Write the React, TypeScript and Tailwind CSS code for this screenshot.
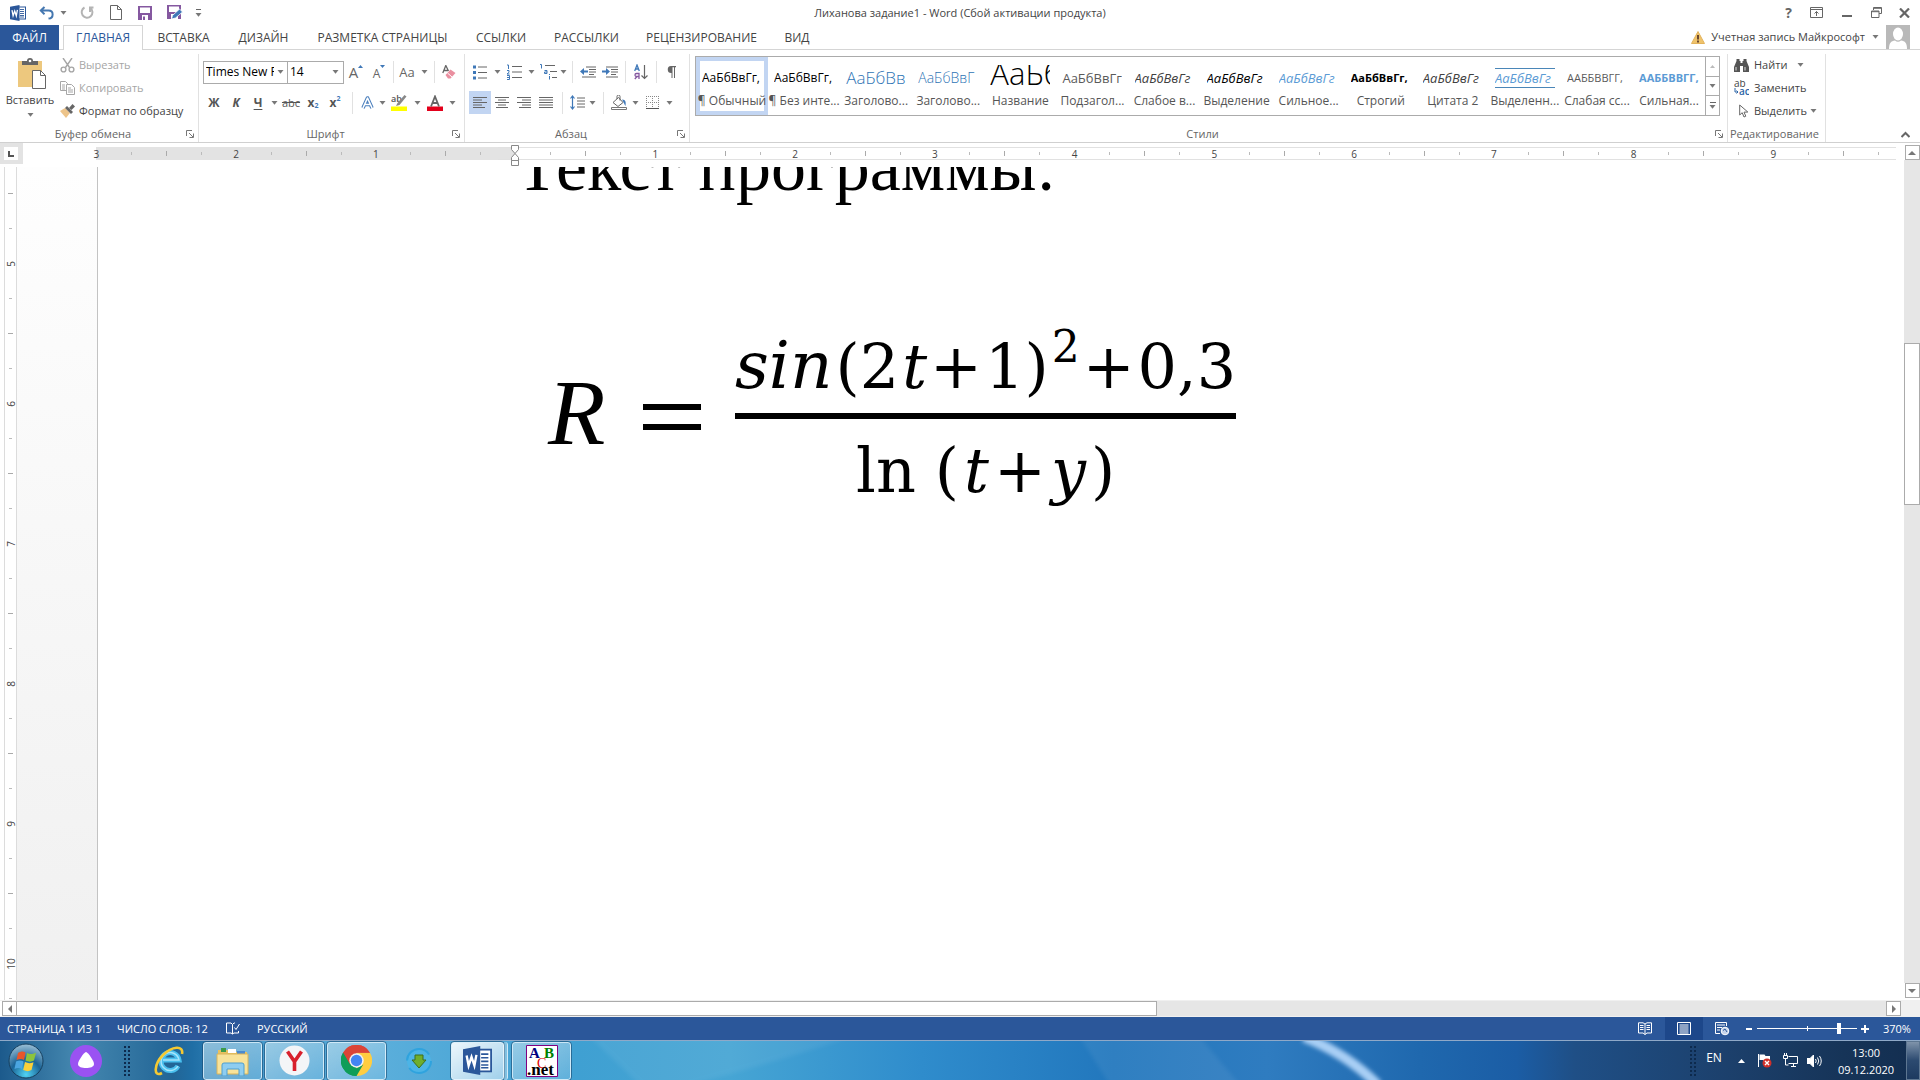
import React from "react";

type Kids = { children?: React.ReactNode };

const Caret = ({ className = "text-[#777]" }: { className?: string }) => (
  <svg width="7" height="4" viewBox="0 0 7 4" className={className} fill="currentColor">
    <path d="M0.5 0h6L3.5 3.8z" />
  </svg>
);

const Drop = ({ label, w = "w-3" }: { label: string; w?: string }) => (
  <button aria-label={label} className={`${w} h-[22px] shrink-0 flex items-center justify-center`}>
    <Caret />
  </button>
);

const Sep = ({ w = "w-[10px]" }: { w?: string }) => (
  <div className={`${w} shrink-0 flex justify-center`}>
    <div className="w-px h-[22px] bg-[#e1e1e1]" />
  </div>
);

const Tool = ({ label, w = "w-[22px]", active = false, children }: Kids & { label: string; w?: string; active?: boolean }) => (
  <button
    aria-label={label}
    className={`${w} h-[23px] shrink-0 flex items-center justify-center ${active ? "bg-[#c2d5f2]" : ""}`}
  >
    {children}
  </button>
);

const Launcher = ({ label }: { label: string }) => (
  <button aria-label={label} className="flex items-center justify-center">
    <svg width="8" height="8" viewBox="0 0 8 8" fill="none" stroke="#777">
      <path d="M0.5 6V0.5H6M3 3l4 4M7.5 3.5v4h-4" />
    </svg>
  </button>
);

const Group = ({ w, name, launcher = true, children }: Kids & { w: string; name: string; launcher?: boolean }) => (
  <section aria-label={name} className={`${w} flex flex-col border-r border-[#e1e1e1] mt-1`}>
    <div className="flex-1 min-h-0">{children}</div>
    <div className="h-[17px] flex items-center pr-[4px] text-[11px] text-[#666]">
      <span className="flex-1 text-center whitespace-nowrap">{name}</span>
      {launcher && <Launcher label={`${name}: параметры`} />}
    </div>
  </section>
);

const WordMark = ({ size = 16 }: { size?: number }) => (
  <svg width={size} height={size} viewBox="0 0 16 16">
    <rect x="8.5" y="2" width="7" height="12" fill="#fff" stroke="#2b579a" />
    <path d="M10 4.5h4M10 6.5h4M10 8.5h4M10 10.5h4M10 12h4" stroke="#2b579a" strokeWidth=".9" />
    <path d="M0 1.8 9.5 0v16L0 14.2z" fill="#2b579a" />
    <path d="M2 5.2l1.1 5.6L4.7 6l1.6 4.8 1.1-5.9" fill="none" stroke="#fff" strokeWidth="1.3" />
  </svg>
);

const TitleBar = () => (
  <header className="h-[25px] grid grid-cols-[1fr_auto_1fr] items-center text-[#444]">
    <div className="flex items-center pl-[10px] h-[22px]">
      <WordMark />
      <button aria-label="Отменить" className="ml-[13px]">
        <svg width="16" height="14" viewBox="0 0 16 14" fill="none" stroke="#4477b0" strokeWidth="2">
          <path d="M5.5 1 1.8 4.6l3.7 3.6M2 4.6h7.5c5.5 0 5.5 7.4 0 8" />
        </svg>
      </button>
      <Drop label="История отмены" w="w-[16px]" />
      <button aria-label="Повторить" className="ml-[8px]">
        <svg width="16" height="14" viewBox="0 0 16 14" fill="none" stroke="#b4b4b4" strokeWidth="2">
          <path d="M5.5 1.5a5.4 5.4 0 1 0 6 .6M11 6V1.5h3.5" />
        </svg>
      </button>
      <button aria-label="Создать" className="ml-[15px]">
        <svg width="12" height="15" viewBox="0 0 12 15" fill="#fff" stroke="#666">
          <path d="M.5.5h7l4 4v10H.5zM7.500.5v4h4" />
        </svg>
      </button>
      <button aria-label="Сохранить" className="ml-[16px]">
        <svg width="14" height="14" viewBox="0 0 14 14">
          <path d="M0 0h14v14H0z" fill="#8558a0" />
          <path d="M2 1.500h10V7H2zM4 9h6v5H4z" fill="#fff" />
          <path d="M5 10.500h2V14H5z" fill="#8558a0" />
        </svg>
      </button>
      <button aria-label="Сохранить как" className="ml-[15px]">
        <svg width="16" height="15" viewBox="0 0 16 15">
          <path d="M0 0h14v14H0z" fill="#8558a0" />
          <path d="M2 1.500h10V7H2zM4 9h7v5H4z" fill="#fff" />
          <path d="m4.500 14 1-3.500L12.500 4l3 3-7 6z" fill="#3f78b8" stroke="#fff" strokeWidth=".8" />
        </svg>
      </button>
      <button aria-label="Настройка панели быстрого доступа" className="ml-[12px] flex flex-col items-center gap-[3px]">
        <span className="w-[5px] h-px bg-[#666]" />
        <Caret />
      </button>
    </div>
    <h1 className="whitespace-nowrap text-[11px]">Лиханова задание1 - Word (Сбой активации продукта)</h1>
    <div className="flex items-center justify-end pr-[10px] gap-[17px] text-[#666]">
      <button aria-label="Справка" className="font-bold text-[14px] leading-4 mr-px">?</button>
      <button aria-label="Параметры ленты">
        <svg width="13" height="11" viewBox="0 0 13 11" fill="none" stroke="#666">
          <path d="M.5.5h12v10H.5zM.5 2.500h12M6.500 9V4.500M4.500 6.500l2-2 2 2" />
        </svg>
      </button>
      <button aria-label="Свернуть" className="h-3 flex items-end pb-[2px] ml-[2px]">
        <span className="w-[10px] h-[2px] bg-[#666]" />
      </button>
      <button aria-label="Восстановить" className="ml-[2px]">
        <svg width="11" height="11" viewBox="0 0 11 11" fill="none" stroke="#666">
          <path d="M2.500 3V.5h8v6H8M.5 4h7.500v6.500H.5zM2.500 1.300h8M.5 4.700H8" />
        </svg>
      </button>
      <button aria-label="Закрыть">
        <svg width="11" height="10" viewBox="0 0 11 10" fill="none" stroke="#666" strokeWidth="2.200">
          <path d="m1 .5 9 9M10 .5l-9 9" />
        </svg>
      </button>
    </div>
  </header>
);

const tabs = [
  { t: "ВСТАВКА", w: "w-[81px]" },
  { t: "ДИЗАЙН", w: "w-[79px]" },
  { t: "РАЗМЕТКА СТРАНИЦЫ", w: "w-[159px]" },
  { t: "ССЫЛКИ", w: "w-[78px]" },
  { t: "РАССЫЛКИ", w: "w-[93px]" },
  { t: "РЕЦЕНЗИРОВАНИЕ", w: "w-[137px]" },
  { t: "ВИД", w: "w-[54px]" },
];

const Tabs = () => (
  <nav className="h-[25px] flex text-[#444] whitespace-nowrap">
    <button className="w-[59px] bg-[#2b579a] text-white pt-px">ФАЙЛ</button>
    <div className="w-1 border-b border-[#d5d5d5]" />
    <button className="w-[80px] border-x border-t border-[#d5d5d5] text-[#2b579a]">ГЛАВНАЯ</button>
    <div className="flex flex-1 border-b border-[#d5d5d5]">
      {tabs.map((x) => (
        <button key={x.t} className={`${x.w} shrink-0 pt-[2px]`}>
          {x.t}
        </button>
      ))}
      <div className="ml-auto flex items-center pr-[10px] text-[11px]">
        <svg width="14" height="13" viewBox="0 0 14 13" className="mr-[6px]">
          <path d="M7 .5 13.500 12.500H.5z" fill="#efc36b" stroke="#e3b35c" strokeLinejoin="round" />
          <path d="M7 4v4.500M7 9.500v2" stroke="#5b3a2a" strokeWidth="1.800" />
        </svg>
        <button className="flex items-center gap-[7px]">
          Учетная запись Майкрософт <Caret />
        </button>
        <svg width="24" height="24" viewBox="0 0 24 24" className="ml-[7px]">
          <path d="M0 0h24v24H0z" fill="#b9b9b9" />
          <ellipse cx="12" cy="9" rx="5" ry="6.500" fill="#fff" />
          <path d="M3 24c0-6 2-8 6-8.500 2 1.600 4 1.600 6 0 4 .5 6 2.500 6 8.500z" fill="#fff" />
        </svg>
      </div>
    </div>
  </nav>
);

const Clipboard = () => (
  <div className="flex text-[11px]">
    <button className="w-[60px] shrink-0 flex flex-col items-center text-[#444] pt-[4px]">
      <svg width="28" height="31" viewBox="0 0 28 31" className="ml-[4px]">
        <path d="M0 3h24v26H0z" fill="#edc87e" />
        <path d="M4 7V3h5a3 3 0 0 1 6 0h5v4z" fill="#666" />
        <circle cx="12" cy="3" r="1.300" fill="#fff" />
        <path d="M14.500 12.500h8l5 5v13h-13z" fill="#fff" stroke="#666" />
        <path d="M22.500 12.500v5h5" fill="none" stroke="#666" />
      </svg>
      <span className="mt-[2px] leading-[18px]">Вставить</span>
      <span className="mt-[4px]"><Caret /></span>
    </button>
    <div className="flex flex-col whitespace-nowrap">
      <button className="h-[22px] flex items-center gap-[4px] text-[#a6a6a6]">
        <svg width="15" height="15" viewBox="0 0 15 15" fill="none" stroke="#a6a6a6" strokeWidth="1.400">
          <path d="m3 0 6.500 9.500M12 0 5.500 9.500" />
          <circle cx="3.500" cy="11.500" r="2.400" />
          <circle cx="11.500" cy="11.500" r="2.400" />
        </svg>
        Вырезать
      </button>
      <button className="h-[23px] flex items-center gap-[4px] text-[#a6a6a6]">
        <svg width="15" height="14" viewBox="0 0 15 14" fill="#fff" stroke="#a6a6a6">
          <path d="M.5.5h5l2 2v7h-7zM2 4h3M2 6h3M2 8h3" />
          <path d="M6.500 3.500h5l3 3v7h-8zM8 7h3M8 9h5M8 11h5" />
        </svg>
        Копировать
      </button>
      <button className="h-[23px] flex items-center gap-[4px] text-[#444]">
        <svg width="15" height="14" viewBox="0 0 15 14">
          <path d="M0 7 5 4l5 5-4 5z" fill="#edc48a" />
          <path d="m5 4 2-2 6 6-2 2z" fill="#666" />
          <path d="m9 4 3.500-4L15 2.500 11.500 6z" fill="#666" />
        </svg>
        Формат по образцу
      </button>
    </div>
  </div>
);

const FontGroup = () => (
  <div className="pl-1">
    <div className="flex items-center mt-[6px] h-[24px]">
      <div className="w-[85px] h-[23px] flex items-center border border-[#ababab]">
        <input aria-label="Шрифт" defaultValue="Times New Roman" className="min-w-0 w-[70px] pl-[2px] text-black outline-none" />
        <Drop label="Выбрать шрифт" />
      </div>
      <div className="w-[56px] h-[23px] flex items-center border border-l-0 border-[#ababab]">
        <input aria-label="Размер шрифта" defaultValue="14" className="min-w-0 w-[41px] pl-[2px] text-black outline-none" />
        <Drop label="Выбрать размер" />
      </div>
      <Tool label="Увеличить размер" w="w-6">
        <span className="text-[15px] text-[#666]">A</span>
        <svg width="5" height="3" viewBox="0 0 5 3" className="self-start mt-[4px]"><path d="M0 3 2.500 0 5 3z" fill="#3f78b8" /></svg>
      </Tool>
      <Tool label="Уменьшить размер">
        <span className="text-[12px] text-[#666] pt-[3px]">A</span>
        <svg width="5" height="3" viewBox="0 0 5 3" className="self-start mt-[4px]"><path d="M0 0 2.500 3 5 0z" fill="#3f78b8" /></svg>
      </Tool>
      <Sep w="w-[6px]" />
      <Tool label="Регистр"><span className="text-[13px] text-[#666]">Aa</span></Tool>
      <Drop label="Варианты регистра" />
      <Sep w="w-2" />
      <Tool label="Удалить форматирование">
        <svg width="14" height="14" viewBox="0 0 14 14">
          <path d="m.8 8 3-7.500L6.500 6M2 5.500h4" fill="none" stroke="#666" strokeWidth="1.300" />
          <path d="m3.500 10 5-5.500L13.500 8 8.500 13.500H6z" fill="#ea8fa0" />
          <path d="M5.500 8 10 12" stroke="#fff" />
        </svg>
      </Tool>
    </div>
    <div className="flex items-center mt-[7px] text-[#555] font-bold">
      <Tool label="Полужирный">Ж</Tool>
      <Tool label="Курсив"><span className="italic">К</span></Tool>
      <Tool label="Подчеркнутый"><span className="underline underline-offset-2">Ч</span></Tool>
      <Drop label="Вид подчеркивания" w="w-[10px]" />
      <Tool label="Зачеркнутый" w="w-6"><span className="line-through font-normal text-[11px]">abc</span></Tool>
      <Tool label="Подстрочный" w="w-5">x<span className="text-[7px] text-[#3f78b8] self-end">2</span></Tool>
      <Tool label="Надстрочный" w="w-6">x<span className="text-[7px] text-[#3f78b8] self-start">2</span></Tool>
      <Sep />
      <Tool label="Текстовые эффекты" w="w-5">
        <svg width="13" height="14" viewBox="0 0 13 14" fill="none" strokeLinejoin="round">
          <path d="M2 12 6.500 2 11 12M4 8.500h5" stroke="#4a7fbd" strokeWidth="3.600" />
          <path d="M2 12 6.500 2 11 12M4 8.500h5" stroke="#fff" strokeWidth="1.600" />
        </svg>
      </Tool>
      <Drop label="Выбрать эффект" w="w-[10px]" />
      <Tool label="Цвет выделения" w="w-[25px]">
        <svg width="17" height="17" viewBox="0 0 17 17">
          <path d="M0 12.500h16V17H0z" fill="#ffff00" />
          <text x="0" y="8" fontSize="9" fontWeight="600" fill="#555">ab</text>
          <path d="m5 12 1.500-3L13.500 1l2 1.500L8.500 11z" fill="#888" />
        </svg>
      </Tool>
      <Drop label="Выбрать цвет выделения" w="w-[10px]" />
      <Tool label="Цвет текста" w="w-[25px]">
        <svg width="16" height="16" viewBox="0 0 16 16">
          <path d="M0 11.500h16V16H0z" fill="#e3001b" />
          <path d="m4 11.500 4-10 4 10M5.500 8h5" fill="none" stroke="#666" strokeWidth="1.800" />
        </svg>
      </Tool>
      <Drop label="Выбрать цвет текста" w="w-[10px]" />
    </div>
  </div>
);

const Lines = ({ d }: { d: string }) => (
  <svg width="15" height="13" viewBox="0 0 15 13" stroke="#666" fill="none"><path d={d} /></svg>
);

const Paragraph = () => (
  <div className="pl-[4px]">
    <div className="flex items-center mt-[6px] h-[24px]">
      <Tool label="Маркеры">
        <svg width="14" height="15" viewBox="0 0 14 15">
          <path d="M5 2h9M5 7.500h9M5 13h9" stroke="#666" />
          <path d="M0 .5h3v3H0zM0 6h3v3H0zM0 11.500h3v3H0z" fill="#3f78b8" />
        </svg>
      </Tool>
      <Drop label="Вид маркеров" />
      <Tool label="Нумерация">
        <svg width="15" height="16" viewBox="0 0 15 16">
          <path d="M5 2.500h10M5 8h10M5 13.500h10" stroke="#666" />
          <path d="M0 1h1.500v4M0 6.500h2v1.800L0 10h2.500M0 11.500h2.500v4H0M0 13.500h2" stroke="#3f78b8" fill="none" />
        </svg>
      </Tool>
      <Drop label="Вид нумерации" />
      <Tool label="Многоуровневый список">
        <svg width="17" height="16" viewBox="0 0 17 16">
          <path d="M5 1.500h10M10 7.500h7M12 13.500h5" stroke="#666" />
          <path d="M0 .5h1.500v4M4.500 6.500H7v3H4.500V8H7M9.500 12v3.500M9.500 10v1" stroke="#3f78b8" fill="none" />
        </svg>
      </Tool>
      <Drop label="Вид списка" w="w-[8px]" />
      <Sep w="w-[10px]" />
      <Tool label="Уменьшить отступ">
        <svg width="16" height="12" viewBox="0 0 16 12">
          <path d="M6 1h10M9 3.500h7M9 6h7M9 8.500h5M2 11h14" stroke="#666" />
          <path d="M0 5.500 4 2v2.500h4v2H4V9z" fill="#3f78b8" />
        </svg>
      </Tool>
      <Tool label="Увеличить отступ">
        <svg width="16" height="12" viewBox="0 0 16 12">
          <path d="M4 1h12M9 3.500h7M9 6h7M9 8.500h5M4 11h12" stroke="#666" />
          <path d="M8 5.500 4 2v2.500H0v2h4V9z" fill="#3f78b8" />
        </svg>
      </Tool>
      <Sep w="w-2" />
      <Tool label="Сортировка" w="w-6">
        <svg width="14" height="16" viewBox="0 0 14 16" fill="none">
          <path d="M.7 7 3 1l2.300 6M1.500 5h3" stroke="#3f78b8" strokeWidth="1.300" />
          <path d="M5 15V9.500H2.500a1.500 1.500 0 0 0 0 3H5M3 12.500.8 15" stroke="#8558a0" strokeWidth="1.300" />
          <path d="M10.500 1v13M7.500 11.500l3 3 3-3" stroke="#666" strokeWidth="1.200" />
        </svg>
      </Tool>
      <Sep w="w-[6px]" />
      <Tool label="Все знаки" w="w-6">
        <svg width="10" height="12" viewBox="0 0 10 12">
          <path d="M5 0H10v1.200H9V12H8V1.200H6.500V12h-1V7A3.500 3.500 0 0 1 5 0z" fill="#666" />
        </svg>
      </Tool>
    </div>
    <div className="flex items-center mt-[7px]">
      <Tool label="По левому краю" active><Lines d="M0 1.500h14M0 4h9M0 6.500h14M0 9h9M0 11.500h12" /></Tool>
      <Tool label="По центру"><Lines d="M0 1.500h14M3 4h8M0 6.500h14M3 9h8M1 11.500h12" /></Tool>
      <Tool label="По правому краю"><Lines d="M0 1.500h14M5 4h9M0 6.500h14M5 9h9M2 11.500h12" /></Tool>
      <Tool label="По ширине"><Lines d="M0 1.500h14M0 4h14M0 6.500h14M0 9h14M0 11.500h14" /></Tool>
      <Sep />
      <Tool label="Интервал" w="w-5">
        <svg width="15" height="15" viewBox="0 0 15 15">
          <path d="M7 3h8M7 6h8M7 9h8M7 12h8" stroke="#666" />
          <path d="M2.500 1v13M.5 3.500l2-2.500 2 2.500M.5 11.500l2 2.500 2-2.500" stroke="#3f78b8" strokeWidth="1.200" fill="none" />
        </svg>
      </Tool>
      <Drop label="Выбрать интервал" w="w-[10px]" />
      <Sep w="w-3" />
      <Tool label="Заливка" w="w-5">
        <svg width="16" height="15" viewBox="0 0 16 15" fill="none">
          <path d="m2 7.500 5.500-5L12 7.500l-5 4zM6 4V1.500a1.500 1.500 0 0 1 3 0v4" stroke="#666" />
          <path d="M11 4.500c4 0 4 3 3.500 6.500-1-1-1.500-3.500-3.500-6.500z" fill="#3f78b8" />
          <path d="M.5 12.500h15v2H.5z" stroke="#777" fill="#fff" />
        </svg>
      </Tool>
      <Drop label="Цвет заливки" />
      <Tool label="Границы">
        <svg width="13" height="13" viewBox="0 0 13 13" fill="none" stroke="#888" strokeDasharray="1 1">
          <path d="M0 .5h13M.5 0v13M12.500 0v13M6.500 0v13M0 6.500h13" />
          <path d="M0 12.500h13" strokeDasharray="none" stroke="#555" />
        </svg>
      </Tool>
      <Drop label="Вид границ" />
    </div>
  </div>
);

const sample = "АаБбВвГг,";
const line = "h-5 leading-[18px] items-center overflow-x-clip";
const stylesList = [
  { n: "¶ Обычный", s: sample, b: line, c: "text-black", on: true },
  { n: "¶ Без инте...", s: sample, b: line, c: "text-black" },
  { n: "Заголово...", s: "АаБбВвГ", b: line, c: "text-[17px] font-light text-[#2e74b5]" },
  { n: "Заголово...", s: "АаБбВвГ", b: line, c: "text-[14px] font-light text-[#2e74b5]" },
  { n: "Название", s: "АаБб", b: "h-[26px] leading-[16px] items-start overflow-hidden", c: "text-[31px] font-light text-black" },
  { n: "Подзагол...", s: "АаБбВвГг", b: line, c: "text-[13px] text-[#5a5a5a]" },
  { n: "Слабое в...", s: "АаБбВвГг", b: line, c: "text-[13px] italic text-[#404040]" },
  { n: "Выделение", s: "АаБбВвГг", b: line, c: "text-[13px] italic text-black" },
  { n: "Сильное...", s: "АаБбВвГг", b: line, c: "text-[13px] italic text-[#5b9bd5]" },
  { n: "Строгий", s: sample, b: line, c: "text-[11px] font-bold text-black" },
  { n: "Цитата 2", s: "АаБбВвГг", b: line, c: "text-[13px] italic text-[#404040]" },
  { n: "Выделенн...", s: "АаБбВвГг", b: line, c: "text-[13px] italic text-[#5b9bd5] border-y border-[#4a86b8]" },
  { n: "Слабая сс...", s: "ААББВВГГ,", b: line, c: "text-[11px] text-[#5a5a5a]" },
  { n: "Сильная...", s: "ААББВВГГ,", b: line, c: "text-[11px] font-bold text-[#5b9bd5]" },
];

const Gallery = () => (
  <div className="flex ml-[5px] mr-[7px] mt-[2px] h-[60px] border border-[#ababab]">
    <div className="flex-1 min-w-0 flex">
      {stylesList.map((x, i) => (
        <button
          key={i}
          className={`flex-1 min-w-0 flex flex-col items-center border-4 pt-[3px] ${x.on ? "border-[#c2d5f2]" : "border-transparent"}`}
        >
          <span className="w-[60px] h-[29px] flex items-center">
            <span className={`w-full flex whitespace-nowrap ${x.b} ${x.c}`}>{x.s}</span>
          </span>
          <span className="text-[#555] leading-[20px] whitespace-nowrap">{x.n}</span>
        </button>
      ))}
    </div>
    <div className="w-[14px] shrink-0 flex flex-col border-l border-[#ababab]">
      <button aria-label="Стили выше" className="flex-1 flex items-center justify-center">
        <svg width="5" height="3" viewBox="0 0 5 3"><path d="M0 3 2.500 0 5 3z" fill="#bbb" /></svg>
      </button>
      <button aria-label="Стили ниже" className="flex-1 flex items-center justify-center border-y border-[#ababab]"><Caret /></button>
      <button aria-label="Все стили" className="flex-1 flex flex-col gap-[2px] items-center justify-center">
        <span className="w-[6px] h-px bg-[#666]" />
        <Caret />
      </button>
    </div>
  </div>
);

const Editing = () => (
  <div className="flex flex-col pl-[6px] text-[11px] text-[#444]">
    <button className="h-[22px] flex items-center gap-[5px]">
      <svg width="15" height="13" viewBox="0 0 15 13" fill="#555">
        <path d="M2.500 0h3v2h1v2h2V2h1V0h3v2l2.500 6v5H9V7H6v6H0V8l2.500-6z" />
        <path d="M2 8v3.500M11 8v3.500" stroke="#ddd" />
      </svg>
      Найти <span className="ml-[5px]"><Caret /></span>
    </button>
    <button className="h-[23px] flex items-center gap-[5px]">
      <svg width="15" height="16" viewBox="0 0 15 16">
        <text x="0" y="7" fontSize="10" fill="#444">ab</text>
        <text x="5" y="15" fontSize="10" fontWeight="600" fill="#2e67a8">ac</text>
        <path d="M1 8v4h3M2.500 10.500 4 12l-1.500 1.500" stroke="#2e67a8" fill="none" />
      </svg>
      Заменить
    </button>
    <button className="h-[23px] flex items-center gap-[5px] pl-[5px]">
      <svg width="10" height="14" viewBox="0 0 10 14" fill="#fff" stroke="#666">
        <path d="M.7 1v10l2.500-2.300L5 13l1.800-.8L5 8.200l3.800-.2z" />
      </svg>
      <span className="flex items-center gap-[3px]">Выделить <Caret /></span>
    </button>
  </div>
);

const Ribbon = () => (
  <div className="h-[93px] flex border-b border-[#d0d0d0]">
    <Group w="w-[199px] shrink-0" name="Буфер обмена"><Clipboard /></Group>
    <Group w="w-[266px] shrink-0" name="Шрифт"><FontGroup /></Group>
    <Group w="w-[225px] shrink-0" name="Абзац"><Paragraph /></Group>
    <Group w="grow basis-0 min-w-0" name="Стили"><Gallery /></Group>
    <Group w="w-[98px] shrink-0" name="Редактирование" launcher={false}><Editing /></Group>
    <div className="w-[94px] shrink-0 flex items-end justify-end pr-[10px] pb-[4px]">
      <button aria-label="Свернуть ленту">
        <svg width="9" height="7" viewBox="0 0 9 7" fill="none" stroke="#666" strokeWidth="2"><path d="m.5 6 4-4 4 4" /></svg>
      </button>
    </div>
  </div>
);

const rulerTicks = Array.from({ length: 52 }, (_, i) => i - 12);
const sideTicks = Array.from({ length: 24 }, (_, i) => i + 18);

const HRuler = () => (
  <div className="h-[24px] shrink-0 flex">
    <div className="w-[23px] h-[21px] shrink-0 bg-[#e3e3e3] p-[4px]">
      <button aria-label="Табуляция" className="w-[14px] h-[13px] bg-white flex items-center justify-center">
        <svg width="6" height="6" viewBox="0 0 6 6" fill="none" stroke="#555" strokeWidth="2"><path d="M1 0v5h5" /></svg>
      </button>
    </div>
    <div className="mt-[4px] h-[13px] flex-1 min-w-0 flex overflow-hidden pl-[56px] pr-[8px] text-[10px] text-[#444]">
      {rulerTicks.map((k) => (
        <div
          key={k}
          className={`flex-1 flex items-center justify-center ${
            k === -12
              ? "bg-[linear-gradient(90deg,transparent_50%,#e3e3e3_50%)]"
              : k < 0
                ? "bg-[#e3e3e3]"
                : k === 0
                  ? "bg-[linear-gradient(90deg,#e3e3e3_50%,transparent_50%)] border-y border-[#e1e1e1]"
                  : "border-y border-[#e1e1e1]"
          }`}
        >
          {k % 4 === 0 ? (
            k !== 0 && <span className="leading-none">{Math.abs(k) / 4}</span>
          ) : (
            <span className={k % 2 === 0 ? "w-px h-[5px] bg-[#aaa]" : "w-px h-[3px] bg-[#bbb]"} />
          )}
        </div>
      ))}
    </div>
    <svg width="12" height="22" viewBox="0 0 12 22" className="absolute left-[509px] top-[2px]" fill="#fff" stroke="#888">
      <path d="M2.500.5h7v4L6 8.500l3.500 4v3h-7v-3L6 8.500l-3.500-4zM2.500 15.500h7v5h-7z" />
    </svg>
  </div>
);

const Frac = () => (
  <div className="flex flex-col items-center">
    <div className="flex items-baseline gap-[3px] text-[62px] leading-[82px] h-[88px]">
      <span className="italic text-[66px]">sin</span>
      <span>(2</span>
      <span className="italic">t</span>
      <span>+</span>
      <span>1)</span>
      <span className="relative text-[44px] leading-[40px] bottom-[26px]">2</span>
      <span>+</span>
      <span>0,3</span>
    </div>
    <div className="w-full h-[6px] bg-black" />
    <div className="flex items-baseline gap-[5px] text-[62px] leading-[80px] mt-[12px]">
      <span className="mr-[14px]">ln</span>
      <span>(</span>
      <span className="italic">t</span>
      <span>+</span>
      <span className="italic">y</span>
      <span>)</span>
    </div>
  </div>
);

const Page = () => (
  <main className="flex-1 min-h-0 flex overflow-hidden">
    <div className="w-[17px] shrink-0 pl-1">
      <div className="border-x border-[#dcdcdc] flex flex-col pt-[9px] text-[10px] text-[#444]">
        {sideTicks.map((k) => (
          <div key={k} className="h-[35px] shrink-0 flex items-center justify-center">
            {k % 4 === 0 ? (
              <span className="-rotate-90 leading-none">{k / 4}</span>
            ) : (
              <span className={k % 2 === 0 ? "h-px w-[5px] bg-[#aaa]" : "h-px w-[3px] bg-[#bbb]"} />
            )}
          </div>
        ))}
      </div>
    </div>
    <div className="w-[81px] shrink-0 border-r border-[#c3c3c3] bg-linear-to-b from-[#fefefe] to-[#f0f0f0]" />
    <article className="flex-1 min-w-0 pl-[418px] text-black whitespace-nowrap">
      <p className="-mt-[40px] h-[79px] text-[70px] leading-[80px] font-['Liberation_Serif',serif]">Текст программы:</p>
      <div className="mt-[119px] pl-[32px] flex items-start font-['DejaVu_Serif',serif]">
        <span className="w-[94px] mt-[32px] text-[94px] leading-[110px] italic font-['Liberation_Serif',serif]">R</span>
        <svg width="60" height="28" viewBox="0 0 60 28" className="mt-[78px] mr-[33px]"><path d="M1 1h58v6H1zM1 21h58v6H1z" /></svg>
        <Frac />
      </div>
    </article>
  </main>
);

const ScrollBtn = ({ label, d }: { label: string; d: string }) => (
  <button aria-label={label} className="w-[15px] h-[15px] shrink-0 bg-white border border-[#ababab] flex items-center justify-center">
    <svg width="8" height="8" viewBox="0 0 8 8" fill="#777"><path d={d} /></svg>
  </button>
);

const HScroll = () => (
  <div className="h-[17px] flex items-center bg-[#e6e6e6] border-y border-[#f0f0f0]">
    <div className="pl-[2px] bg-white"><ScrollBtn label="Прокрутить влево" d="M6 0v8L2 4z" /></div>
    <div className="flex-1 flex">
      <div className="w-[61%] h-[15px] bg-white border border-l-0 border-[#ababab]" />
    </div>
    <ScrollBtn label="Прокрутить вправо" d="M2 0v8l4-4z" />
    <div className="w-[19px] h-[15px] bg-[#f0f0f0]" />
  </div>
);

const VScroll = () => (
  <div className="w-4 shrink-0 flex flex-col items-center pt-[2px]">
    <ScrollBtn label="Прокрутить вверх" d="M0 6h8L4 2z" />
    <div className="flex-1 w-full bg-[#e6e6e6] flex flex-col">
      <div className="grow-[23]" />
      <div className="grow-[20] bg-white border border-[#ababab]" />
      <div className="grow-[60]" />
    </div>
    <ScrollBtn label="Прокрутить вниз" d="M0 2h8L4 6z" />
    <div className="h-[2px]" />
  </div>
);

const StatusBar = () => (
  <footer className="h-[23px] flex items-center bg-[#2b579a] text-white text-[11px] whitespace-nowrap">
    <span className="w-[110px] pl-[7px]">СТРАНИЦА 1 ИЗ 1</span>
    <span className="w-[116px] pl-[7px]">ЧИСЛО СЛОВ: 12</span>
    <button aria-label="Правописание" className="w-[31px]">
      <svg width="14" height="13" viewBox="0 0 14 13" fill="none" stroke="#fff">
        <path d="M6.500 2.500v9.500L5 11H.5V1H5l1.500 1.500L8 1h1M6.500 12 8 11h4.500V9" />
        <path d="m8.500 5.500 1.500 2 3.500-5.500" />
      </svg>
    </button>
    <button>РУССКИЙ</button>
    <div className="ml-auto flex items-center h-full">
      <button aria-label="Режим чтения" className="w-[40px] flex justify-center">
        <svg width="14" height="13" viewBox="0 0 14 13" fill="none" stroke="#fff">
          <path d="M7 2v10.500M7 2 5 .8H.5V11H5l2 1.500L9 11h4.500V.8H9zM2 3.500h3.500M2 5.500h3.500M2 7.500h3.500M8.500 3.500H12M8.500 5.500H12M8.500 7.500H12" />
        </svg>
      </button>
      <button aria-label="Разметка страницы" className="w-[38px] h-full bg-[#1d478a] flex items-center justify-center">
        <svg width="14" height="13" viewBox="0 0 14 13" fill="none" stroke="#fff"><path d="M.5.5h13v12H.5zM2.500 3h9M2.500 5h9M2.500 7h9M2.500 9h9M2.500 11h9" /></svg>
      </button>
      <button aria-label="Веб-документ" className="w-[38px] flex justify-center">
        <svg width="15" height="14" viewBox="0 0 15 14" fill="none" stroke="#fff">
          <path d="M11.500 4V.5H.5v11H5M2 3h8M2 5.500h5M2 8h3" />
          <circle cx="10" cy="9" r="3.800" fill="#c5d3ea" />
          <path d="M8 8.500 10 7l2 3" stroke="#2b579a" />
        </svg>
      </button>
      <button aria-label="Уменьшить" className="w-[16px] flex justify-center"><span className="w-[6px] h-[2px] bg-white" /></button>
      <div className="relative w-[100px] flex items-center">
        <input
          type="range"
          aria-label="Масштаб"
          min={0}
          max={100}
          defaultValue={83}
          className="w-full h-[11px] appearance-none bg-[linear-gradient(#fff,#fff)] bg-[length:100%_1px] bg-center bg-no-repeat [&::-webkit-slider-thumb]:appearance-none [&::-webkit-slider-thumb]:w-1 [&::-webkit-slider-thumb]:h-[11px] [&::-webkit-slider-thumb]:bg-white"
        />
        <span className="absolute left-1/2 w-px h-[5px] bg-white" />
      </div>
      <button aria-label="Увеличить" className="w-4 flex justify-center">
        <svg width="8" height="8" viewBox="0 0 8 8" stroke="#fff" strokeWidth="2"><path d="M4 0v8M0 4h8" /></svg>
      </button>
      <span className="w-[47px] pl-[10px]">370%</span>
    </div>
  </footer>
);

const Grip = () => (
  <div className="w-[8px] h-[32px] bg-[radial-gradient(#0d2a4d_1px,transparent_1px)] bg-[length:4px_4px]" />
);

const TaskBtn = ({ label, w = "w-[59px]", cls = "from-[#b9dcec]/70 to-[#7fc0e4]/50", children }: Kids & { label: string; w?: string; cls?: string }) => (
  <button
    aria-label={label}
    className={`${w} h-[38px] shrink-0 flex items-center justify-center rounded-[3px] border border-[#e4f4fc]/80 outline outline-[#174a72]/60 bg-linear-to-br ${cls}`}
  >
    {children}
  </button>
);

const Taskbar = () => (
  <div className="relative h-[40px] flex items-center overflow-hidden border-t border-[#8fa9c8] text-white bg-[linear-gradient(90deg,#1c5a8c_0%,#4588b0_4%,#226596_9%,#1f6ea5_10%,#4b9fd0_14%,#5aaedb_20%,#3fa0d2_30%,#46a5d4_38%,#2f8ccc_48%,#2277bd_58%,#2f7cc0_66%,#1f68ae_74%,#1b5da5_79%,#1f4f86_82%,#1c406c_90%,#163458_96%,#132e50_100%)]">
    <svg className="absolute left-0 top-0 h-full w-full" viewBox="0 0 1920 39" preserveAspectRatio="none">
      <defs><filter id="soft"><feGaussianBlur stdDeviation="2" /></filter></defs>
      <path d="M590-4 850-4Q780 20 690 44H640zM1080-4h120l40 48H1110z" fill="#fff" opacity=".06" filter="url(#soft)" />
      <path d="M1304-4C1335 8 1360 26 1378 44" fill="none" stroke="#a9cff5" strokeWidth="10" filter="url(#soft)" />
    </svg>
    <div className="relative flex-1 flex items-center h-full">
      <button aria-label="Пуск" className="w-[52px] flex justify-center">
        <svg width="36" height="36" viewBox="0 0 36 36">
          <defs>
            <radialGradient id="orb" cx=".5" cy=".9" r=".9">
              <stop offset="0" stopColor="#4fd3f5" /><stop offset=".5" stopColor="#1b6496" /><stop offset="1" stopColor="#9cc0d6" />
            </radialGradient>
          </defs>
          <circle cx="18" cy="18" r="17" fill="url(#orb)" stroke="#16405f" />
          <path d="M10 10c3-2 5-2 7.500-.5L16 17c-2.500-1.500-4.500-1.500-7.500 0z" fill="#e8562a" />
          <path d="M19 10c3 1.500 5 1.500 9-.2L26 17.500c-3 1.500-5 1.500-8.500 0z" fill="#8cc43c" />
          <path d="M8 18.500c3-1.500 5-1.500 7.500 0L14 26c-2.500-1.500-4.500-1.500-7.500 0z" fill="#4ba6e0" />
          <path d="M17 19c3 1.500 5 1.500 8.500.2L23.500 27c-2.500 1.500-5 1.500-8.300 0z" fill="#fbd038" />
        </svg>
      </button>
      <button aria-label="Алиса" className="w-[68px] flex justify-center">
        <svg width="32" height="32" viewBox="0 0 32 32">
          <circle cx="16" cy="16" r="16" fill="#9a52f2" />
          <path d="M16 7c2 0 8 9 8 12s-4 4-8 4-8-1-8-4 6-12 8-12z" fill="#fff" />
        </svg>
      </button>
      <div className="w-[14px] flex justify-center"><Grip /></div>
      <button aria-label="Internet Explorer" className="w-[69px] flex justify-center">
        <svg width="30" height="30" viewBox="0 0 30 30" fill="none">
          <path d="M24 20a9 9 0 1 1 1-6H9" stroke="#49bfee" strokeWidth="5" />
          <path d="M24 20a9 9 0 1 1 1-6H9" stroke="#a5e4fb" strokeWidth="1.500" />
          <path d="M28 8C30-1 18 0 9 9S-1 32 8 27" stroke="#f5c932" strokeWidth="2.600" />
        </svg>
      </button>
      <div className="flex items-center gap-[3px]">
        <TaskBtn label="Проводник">
          <svg width="34" height="30" viewBox="0 0 34 30">
            <path d="M2 4h10l2 2h17v21H2z" fill="#e9c15f" />
            <path d="M5 2h5v4H5z" fill="#3d9b4a" /><path d="M12 3h8v4h-8z" fill="#fff" /><path d="M21 5h8v3h-8z" fill="#4a8ad0" />
            <path d="M1 8h31v20H1z" fill="#f8e39a" stroke="#d9b45a" />
            <path d="M6 30V19q0-2 2-2h18q2 0 2 2v11h-5v-7H11v7z" fill="#8ecdf0" stroke="#4e9fd0" />
          </svg>
        </TaskBtn>
        <TaskBtn label="Яндекс Браузер">
          <svg width="31" height="31" viewBox="0 0 31 31">
            <circle cx="15.500" cy="15.500" r="15" fill="#f4f5f7" />
            <path d="m8.500 6.500 7 10 7-10M15.500 15.500V26" fill="none" stroke="#d8202c" strokeWidth="3.600" />
          </svg>
        </TaskBtn>
        <TaskBtn label="Chrome">
          <svg width="31" height="31" viewBox="0 0 30 30">
            <path d="M15 15 2 7.500A15 15 0 0 1 28 7.500H15z" fill="#db4437" />
            <path d="M15 15 15 30A15 15 0 0 1 2 7.500z" fill="#0f9d58" />
            <path d="M15 15V7.500h13A15 15 0 0 1 15 30z" fill="#ffcd40" />
            <path d="M15 7.500h13A15 15 0 0 0 2 7.500l6.500 11z" fill="#db4437" />
            <path d="M2 7.500 8.500 18.800 15 22.500 21.500 18.800 15 30A15 15 0 0 1 2 7.500z" fill="#0f9d58" />
            <circle cx="15" cy="15" r="7" fill="#f1f1f1" /><circle cx="15" cy="15" r="5.500" fill="#4285f4" />
          </svg>
        </TaskBtn>
      </div>
      <button aria-label="Загрузчик" className="w-[65px] flex justify-center">
        <svg width="30" height="30" viewBox="0 0 30 30">
          <circle cx="15" cy="15" r="12" fill="#4cb4e6" stroke="#2fa3de" strokeWidth="2" strokeDasharray="30 8" />
          <path d="M11 9h8v5h3L15 22l-7-8h3z" fill="#6fae2c" stroke="#3f6f1c" />
        </svg>
      </button>
      <TaskBtn label="Word" w="w-[53px]" cls="from-white/90 to-[#b5daf0]/80"><WordMark size={29} /></TaskBtn>
      <div className="w-[4px] h-[38px] rounded-r-[3px] border-r border-[#e4f4fc]/80 bg-white/30 mr-[4px]" />
      <TaskBtn label="PascalABC.NET">
        <svg width="32" height="32" viewBox="0 0 32 32" fontFamily="Liberation Serif" fontWeight="bold">
          <path d="M.5.5h31v31H.5z" fill="#fff" stroke="#800080" />
          <text x="3" y="13" fontSize="15" fill="#000080">A</text>
          <text x="18" y="13" fontSize="15" fill="#008000">B</text>
          <text x="11" y="23" fontSize="14" fontWeight="400" fill="#e00000">C</text>
          <text x="1" y="30" fontSize="17" fill="#000">.net</text>
        </svg>
      </TaskBtn>
    </div>
    <div className="relative flex items-center h-full text-[11px]">
      <Grip />
      <button className="w-[34px] pb-[6px] text-[12px]">EN</button>
      <button aria-label="Скрытые значки" className="w-[20px] flex justify-center">
        <svg width="7" height="4" viewBox="0 0 7 4" fill="#fff"><path d="M0 4 3.500 0 7 4z" /></svg>
      </button>
      <button aria-label="Центр поддержки" className="w-[27px] flex justify-center">
        <svg width="15" height="15" viewBox="0 0 15 15">
          <path d="M1.500 1v13" stroke="#fff" /><path d="M2.500 1.500h5l1 1.500h4.500v5H7L6 7H2.500z" fill="#fff" />
          <circle cx="10" cy="10" r="4.500" fill="#d0302a" /><path d="m8 8 4 4M12 8l-4 4" stroke="#fff" strokeWidth="1.400" />
        </svg>
      </button>
      <button aria-label="Сеть" className="w-[24px] flex justify-center">
        <svg width="15" height="15" viewBox="0 0 15 15" fill="none" stroke="#fff">
          <path d="M5.500 3.500h9v7h-9M8 13.500h5M10.500 11v2M.5 2.500h4v3h-4zM1.500 0v2M3.500 0v2M2.500 6v6h3" />
        </svg>
      </button>
      <button aria-label="Громкость" className="w-[24px] flex justify-center">
        <svg width="15" height="14" viewBox="0 0 15 14" fill="none" stroke="#fff">
          <path d="M0 4.500h3L6.500 1v12L3 9.500H0z" fill="#fff" /><path d="M8.500 5q1.500 2 0 4M10.500 3.500q2.500 3.500 0 7M12.500 2q3.500 5 0 10" />
        </svg>
      </button>
      <button className="w-[80px] flex flex-col items-center leading-[17px]">
        <span>13:00</span>
        <span>09.12.2020</span>
      </button>
      <button aria-label="Свернуть все окна" className="w-[14px] h-full border border-[#5d7691] bg-linear-to-b from-[#7f93aa] via-[#2c4a70] to-[#1d3a60]" />
    </div>
  </div>
);

export default function App() {
  return (
    <div className="h-screen flex flex-col bg-white font-['Open_Sans','Noto_Sans',sans-serif] text-[12px] leading-[16px] overflow-hidden">
      <TitleBar />
      <Tabs />
      <Ribbon />
      <div className="flex-1 min-h-0 flex">
        <div className="relative flex-1 min-w-0 flex flex-col">
          <HRuler />
          <Page />
        </div>
        <VScroll />
      </div>
      <HScroll />
      <StatusBar />
      <Taskbar />
    </div>
  );
}
